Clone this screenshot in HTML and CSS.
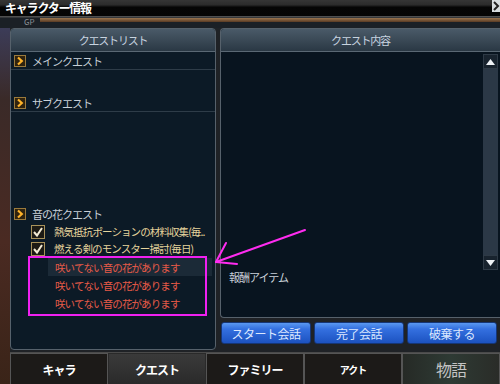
FILE: index.html
```html
<!DOCTYPE html>
<html lang="ja">
<head>
    <meta charset="UTF-8">
    <title>キャラクター情報</title>
    <link rel="stylesheet" href="styles.css">
</head>
<body>

    <div class="window">
        <div class="titlebar">
            <span class="title">キャラクター情報</span>
            <span class="corner-btn">
                <svg width="8" height="12" viewBox="0 0 8 12"><path d="M2 2 L6 6 L2 10" fill="none" stroke="#222" stroke-width="2"/></svg>
            </span>
        </div>
        <div class="gp">
            <span class="gp-label">GP</span>
            <div class="gp-bar"></div>
        </div>

        <div class="body">
            <div class="edge"></div>
            <div class="inner">
                <div class="panels">

                    <!-- quest list -->
                    <section class="panel quest-list">
                        <div class="panel-head">クエストリスト</div>
                        <div class="list">
                            <div class="cat cat-main">
                                <svg class="chev" width="12" height="12" viewBox="0 0 12 12"><rect x=".5" y=".5" width="11" height="11" fill="#30230e" stroke="#9a7a3c"/><path d="M4 2.5 L7.8 6 L4 9.5" fill="none" stroke="#ffb42a" stroke-width="2.2"/></svg>
                                メインクエスト
                            </div>
                            <div class="cat cat-sub">
                                <svg class="chev" width="12" height="12" viewBox="0 0 12 12"><rect x=".5" y=".5" width="11" height="11" fill="#30230e" stroke="#9a7a3c"/><path d="M4 2.5 L7.8 6 L4 9.5" fill="none" stroke="#ffb42a" stroke-width="2.2"/></svg>
                                サブクエスト
                            </div>
                            <div class="cat cat-flower">
                                <svg class="chev" width="12" height="12" viewBox="0 0 12 12"><rect x=".5" y=".5" width="11" height="11" fill="#30230e" stroke="#9a7a3c"/><path d="M4 2.5 L7.8 6 L4 9.5" fill="none" stroke="#ffb42a" stroke-width="2.2"/></svg>
                                音の花クエスト
                            </div>
                            <div class="item done">
                                <svg class="check" width="14" height="14" viewBox="0 0 14 14"><rect x=".5" y=".5" width="13" height="13" fill="#1c1a14" stroke="#a8925a"/><path d="M3 7 L6 10.5 L11 3" fill="none" stroke="#f2ead2" stroke-width="2"/></svg>
                                <span class="item-text">熱気抵抗ポーションの材料収集(毎..</span>
                            </div>
                            <div class="item done">
                                <svg class="check" width="14" height="14" viewBox="0 0 14 14"><rect x=".5" y=".5" width="13" height="13" fill="#1c1a14" stroke="#a8925a"/><path d="M3 7 L6 10.5 L11 3" fill="none" stroke="#f2ead2" stroke-width="2"/></svg>
                                <span class="item-text">燃える剣のモンスター掃討(毎日)</span>
                            </div>
                            <div class="item warn selected"><span class="item-text">咲いてない音の花があります</span></div>
                            <div class="item warn"><span class="item-text">咲いてない音の花があります</span></div>
                            <div class="item warn"><span class="item-text">咲いてない音の花があります</span></div>
                        </div>
                    </section>

                    <div class="right">
                        <!-- quest detail -->
                        <section class="panel detail">
                            <div class="panel-head">クエスト内容</div>
                            <div class="detail-body">
                                <div class="detail-text">
                                    <div class="reward">報酬アイテム</div>
                                </div>
                                <div class="scrollbar">
                                    <div class="scroll-btn">
                                        <svg width="9" height="6" viewBox="0 0 9 6"><path d="M0 6 L4.5 0 L9 6 Z" fill="#eef2f6"/></svg>
                                    </div>
                                    <div class="scroll-track"></div>
                                    <div class="scroll-btn">
                                        <svg width="9" height="6" viewBox="0 0 9 6"><path d="M0 0 L4.5 6 L9 0 Z" fill="#eef2f6"/></svg>
                                    </div>
                                </div>
                            </div>
                        </section>

                        <div class="actions">
                            <button class="action-btn">スタート会話</button>
                            <button class="action-btn">完了会話</button>
                            <button class="action-btn">破棄する</button>
                        </div>
                    </div>
                </div>

                <div class="tabs">
                    <div class="tab">キャラ</div>
                    <div class="tab active">クエスト</div>
                    <div class="tab">ファミリー</div>
                    <div class="tab small">アクト</div>
                    <div class="tab story">物語</div>
                </div>
            </div>
        </div>

        <!-- magenta annotation -->
        <div class="mark-box"></div>
        <svg class="mark-arrow" width="500" height="384" viewBox="0 0 500 384">
            <g fill="none" stroke="#ff2cf0" stroke-width="2" stroke-linecap="round">
                <path d="M305 230 L216 262"/>
                <path d="M216 262 L226 243"/>
                <path d="M216 262 L237 264"/>
            </g>
        </svg>
    </div>

</body>
</html>
```

FILE: styles.css
```css
body {
    margin: 0;
    background-color: #111;
    font-family: "Noto Sans CJK JP", "Noto Sans", sans-serif;
}

.window {
    position: relative;
    width: 500px;
    height: 384px;
    overflow: hidden;
    background-color: #1f2226;
    display: flex;
    flex-direction: column;
}

/* --- title & gp strip --- */
.titlebar {
    height: 16px;
    display: flex;
    justify-content: space-between;
    align-items: flex-start;
    background: linear-gradient(#363636 0, #2c2c2c 30%, #060606 45%, #050505 100%);
}

.title {
    color: #fff;
    font-size: 12px;
    font-weight: bold;
    letter-spacing: -1.2px;
    line-height: 16px;
    margin-left: 5px;
}

.corner-btn {
    width: 8px;
    height: 12px;
    background: #d8dde0;
    display: flex;
}

.gp {
    height: 12px;
    display: flex;
    align-items: flex-start;
    background: linear-gradient(#505050 0, #505050 1px, #1b2026 2px, #1b2026 100%);
}

.gp-label {
    color: #8a8f96;
    font-size: 8px;
    line-height: 8px;
    margin: 2px 0 0 24px;
    width: 16px;
}

.gp-bar {
    flex-grow: 1;
    height: 4px;
    margin-top: 2px;
    background: linear-gradient(#9a7650, #5a3a22);
}

/* --- main area --- */
.body {
    flex-grow: 1;
    display: flex;
}

.edge {
    width: 10px;
    background: linear-gradient(#3c3c58 0, #3a2a28 20%, #4a2a22 60%, #3a2418 100%);
}

.inner {
    flex-grow: 1;
    display: flex;
    flex-direction: column;
}

.panels {
    height: 324px;
    display: flex;
    gap: 4px;
}

.panel {
    border: 1px solid #56616b;
    border-radius: 4px;
    overflow: hidden;
    display: flex;
    flex-direction: column;
}

.panel-head {
    height: 22px;
    line-height: 22px;
    text-align: center;
    color: #c8d4e0;
    font-size: 11px;
    letter-spacing: -1.2px;
    background: linear-gradient(#4a5a68, #2a3844);
    border-bottom: 1px solid #5a6874;
}

.quest-list {
    width: 204px;
    height: 320px;
    background-color: #0c1a26;
}

.list {
    display: flex;
    flex-direction: column;
}

.cat {
    height: 17px;
    display: flex;
    align-items: center;
    gap: 6px;
    padding-left: 3px;
    color: #c8d0d8;
    font-size: 11px;
    letter-spacing: -1px;
    border-bottom: 1px solid #2e3c48;
}

.cat-sub {
    margin-top: 24px;
}

.cat-flower {
    margin-top: 93px;
    border-bottom-color: transparent;
}

.chev {
    flex-shrink: 0;
}

.item {
    height: 17px;
    display: flex;
    align-items: center;
    font-size: 10.5px;
    letter-spacing: -0.9px;
    white-space: nowrap;
}

.item.done {
    padding-left: 20px;
    color: #e6d49c;
}

.item.done .check {
    margin-right: 9px;
    flex-shrink: 0;
}

.item.warn {
    margin-left: 37px;
    margin-right: 3px;
    padding-left: 7px;
    color: #e85a48;
    height: 18px;
}

.item.selected {
    margin-top: 1px;
    background-color: #1b2a37;
}

/* --- detail --- */
.right {
    flex-grow: 1;
    display: flex;
    flex-direction: column;
}

.detail {
    height: 288px;
    background-color: #08141f;
    border-right: none;
    border-radius: 4px 0 0 4px;
}

.detail-body {
    flex-grow: 1;
    display: flex;
}

.detail-text {
    flex-grow: 1;
    padding-left: 8px;
}

.reward {
    margin-top: 217px;
    color: #c8d0d8;
    font-size: 11px;
    letter-spacing: -1px;
}

.scrollbar {
    width: 15px;
    height: 216px;
    margin: 2px 2px 0 0;
    display: flex;
    flex-direction: column;
}

.scroll-btn {
    height: 15px;
    background: #18232e;
    border: 1px solid #2e3a46;
    box-sizing: border-box;
    display: flex;
    justify-content: center;
    align-items: center;
}

.scroll-track {
    flex-grow: 1;
    background: #2b3846;
}

.actions {
    display: flex;
    gap: 3px;
    padding: 4px 0 0 1px;
}

.action-btn {
    width: 90px;
    height: 22px;
    padding: 0;
    border: 1px solid #163676;
    border-radius: 3px;
    background: linear-gradient(#5a98f0 0, #3470e0 30%, #1c52c0 100%);
    color: #dce8ff;
    font-family: "Noto Sans CJK JP", sans-serif;
    font-size: 12px;
    letter-spacing: -0.5px;
}

/* --- tabs --- */
.tabs {
    height: 32px;
    display: flex;
    border-top: 1px solid #4a4a4a;
    box-sizing: border-box;
}

.tab {
    flex: 1;
    display: flex;
    justify-content: center;
    align-items: center;
    color: #fff;
    font-size: 12px;
    font-weight: bold;
    letter-spacing: -1px;
    background: #1c1a18;
    border: 1px solid #555;
    border-bottom: none;
}

.tab.active {
    background: linear-gradient(#3a3a3a, #2a2a2a);
    border-color: #2a2a2a;
}

.tab.small {
    font-size: 10px;
}

.tab.story {
    font-size: 16px;
    font-weight: normal;
    color: #c4c4c4;
    background: linear-gradient(90deg, #262a26, #2e3a34 50%, #2a2c28);
}

/* --- annotation overlay --- */
.mark-box {
    position: absolute;
    left: 28px;
    top: 256px;
    width: 175px;
    height: 56px;
    border: 2px solid #f020f0;
}

.mark-arrow {
    position: absolute;
    left: 0;
    top: 0;
}
```
